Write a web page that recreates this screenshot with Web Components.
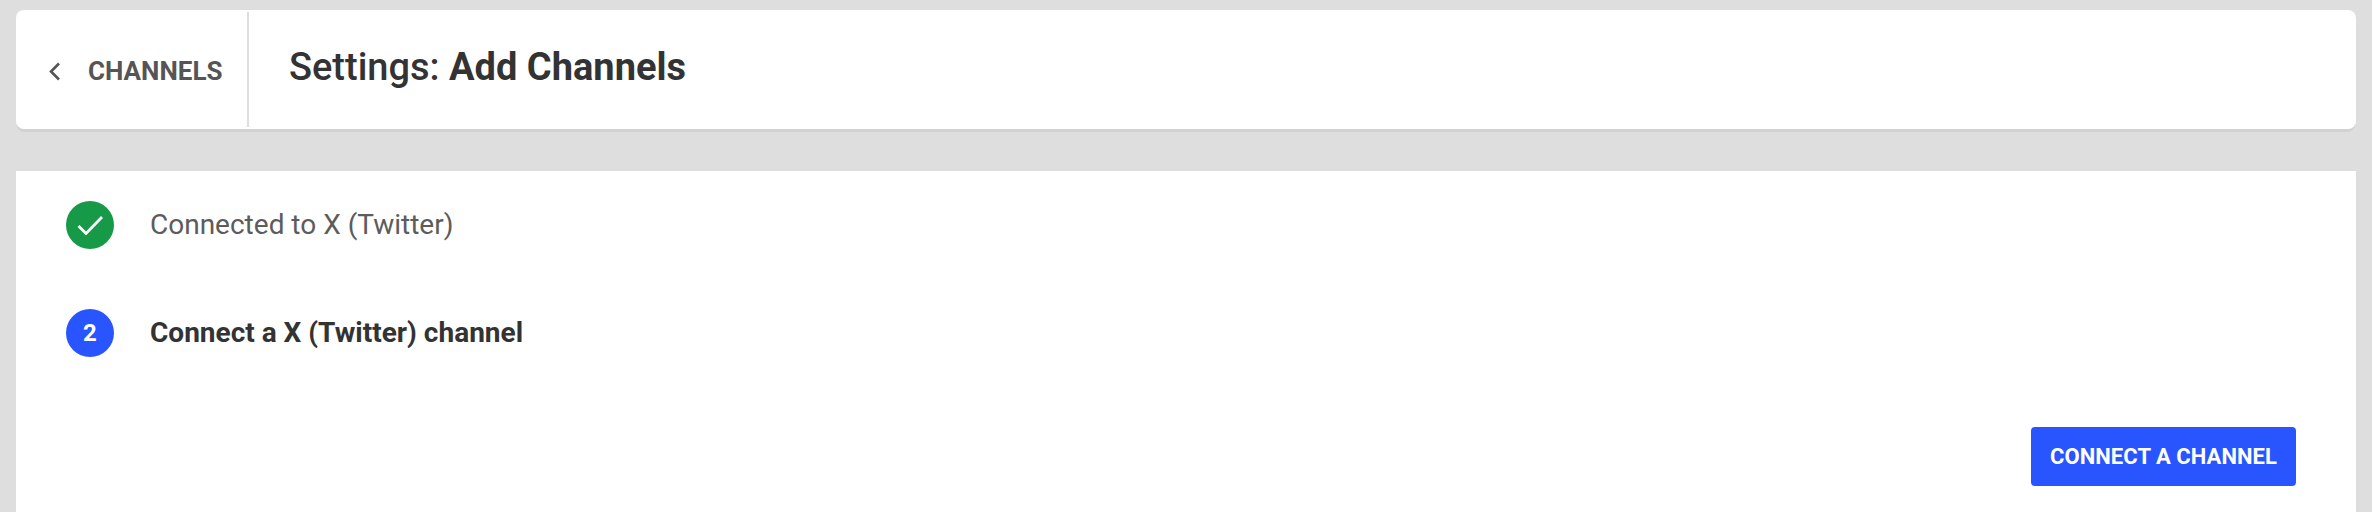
<!DOCTYPE html>
<html lang="en">

<head>
  <meta charset="UTF-8">
  <title>Settings: Add Channels</title>
  <style>
    html, body {
      margin: 0;
      height: 100%;
      overflow: hidden;
      background-color: #dedede;
      font-family: Roboto, "Liberation Sans", sans-serif;
    }
  </style>
</head>

<body>
  <template id="page-template">
    <style>
      :host {
        display: flex;
        flex-direction: column;
        gap: 42px;
        height: 512px;
        box-sizing: border-box;
        padding: 10px 16px 0;
        opacity: 0.999;
      }
    </style>
    <slot name="header"></slot>
    <slot></slot>
  </template>

  <template id="header-template">
    <style>
      :host {
        display: flex;
        flex: none;
        height: 119px;
        background-color: white;
        border-radius: 8px;
        box-shadow: 0 4px 0 -1px #d2d2d2;
      }

      .back {
        display: flex;
        align-items: center;
        width: 233px;
        height: 115px;
        margin-top: 2px;
        box-sizing: border-box;
        padding: 0 0 0 32px;
        gap: 27px;
        border-right: 2px solid #dedede;
        color: #555;
        font-size: 26px;
        font-weight: 700;
      }

      .back svg {
        display: block;
        flex: none;
        margin-top: 3px;
      }

      .back span {
        margin-top: 3px;
      }

      h1 {
        margin: 0 0 5px 40px;
        align-self: center;
        color: #333;
        font-size: 38px;
        font-weight: 700;
        line-height: 44px;
      }
    </style>
    <div class="back">
      <svg width="13" height="19" viewBox="0 0 13 19" fill="none" stroke="#555" stroke-width="2.6">
        <path d="M11 1.5 3 9.5l8 8" />
      </svg>
      <span><slot name="back"></slot></span>
    </div>
    <h1><slot></slot></h1>
  </template>

  <template id="card-template">
    <style>
      :host {
        display: flex;
        flex: 1;
        flex-direction: column;
        box-sizing: border-box;
        min-height: 0;
        padding: 30px 60px 0 50px;
        background-color: white;
      }
    </style>
    <slot></slot>
  </template>

  <template id="step-template">
    <style>
      :host {
        display: flex;
        flex: none;
        align-items: center;
        gap: 36px;
        height: 48px;
        margin-bottom: 60px;
        color: #5c5c5c;
        font-size: 28px;
        font-weight: 400;
      }

      :host([active]) {
        color: #333;
        font-weight: 700;
      }

      .badge {
        display: flex;
        flex: none;
        justify-content: center;
        align-items: center;
        width: 48px;
        height: 48px;
        border-radius: 50%;
        color: white;
        font-size: 24px;
        font-weight: 700;
        background-color: #2855ff;
      }

      :host([done]) .badge {
        background-color: #179a48;
      }

      .label {
        margin-top: -2px;
      }
    </style>
    <div class="badge"><slot name="badge"></slot></div>
    <div class="label"><slot></slot></div>
  </template>

  <template id="button-template">
    <style>
      :host {
        display: block;
        flex: none;
        align-self: flex-end;
        margin-top: 10px;
      }

      button {
        display: block;
        width: 265px;
        height: 59px;
        padding: 0;
        border: 0;
        border-radius: 4px;
        color: white;
        font: 700 22px Roboto, "Liberation Sans", sans-serif;
        letter-spacing: 0.05px;
        background-color: #2855ff;
      }
    </style>
    <button><slot></slot></button>
  </template>

  <script>
    // every element here is only a template in a shadow root
    function defineFromTemplate(name, templateId) {
      customElements.define(name, class extends HTMLElement {
        constructor() {
          super();
          this.attachShadow({ mode: 'open' });
          const template = document.getElementById(templateId);
          this.shadowRoot.appendChild(template.content.cloneNode(true));
        }
      });
    }

    defineFromTemplate('settings-page', 'page-template');
    defineFromTemplate('settings-header', 'header-template');
    defineFromTemplate('settings-card', 'card-template');
    defineFromTemplate('setup-step', 'step-template');
    defineFromTemplate('action-button', 'button-template');
  </script>

  <settings-page>
    <settings-header slot="header">
      <span slot="back">CHANNELS</span>
      <span style="font-weight: 500">Settings:</span> Add Channels
    </settings-header>
    <settings-card>
      <setup-step done>
        <svg slot="badge" width="26" height="20" viewBox="0 0 26 20" fill="none" stroke="white" stroke-width="2.7" style="display: block">
          <path d="M1.5 11 9 18.5 25 2" />
        </svg>
        Connected to X (Twitter)
      </setup-step>
      <setup-step active>
        <span slot="badge">2</span>
        Connect a X (Twitter) channel
      </setup-step>
      <action-button>CONNECT A CHANNEL</action-button>
    </settings-card>
  </settings-page>
</body>

</html>
